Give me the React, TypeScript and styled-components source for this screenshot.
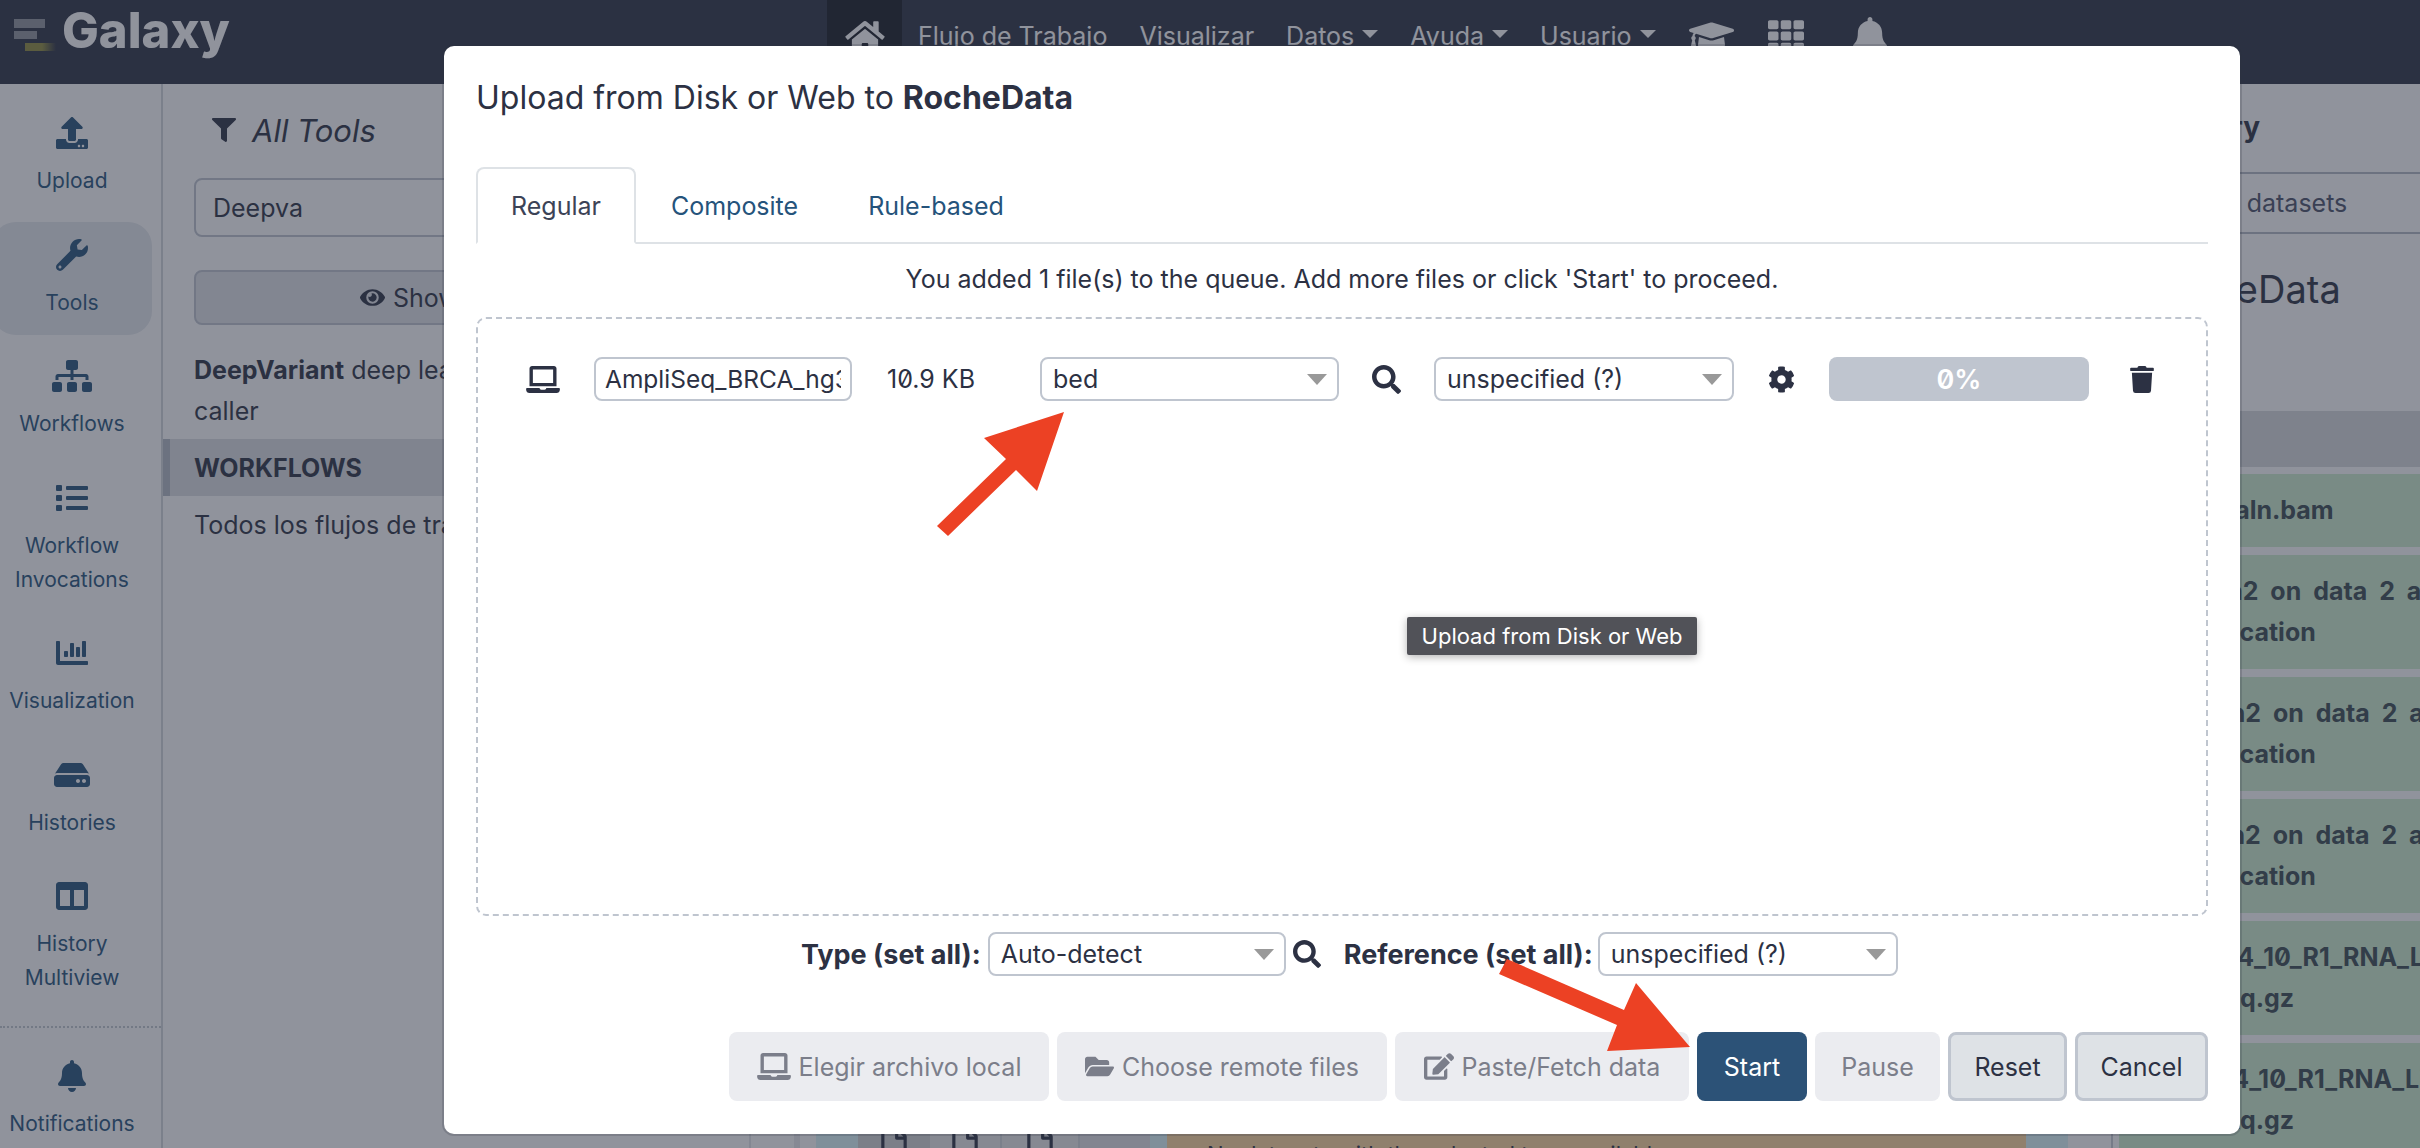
import React from 'react';
import styled, { createGlobalStyle } from 'styled-components';
import {
  FaBell,
  FaChartBar,
  FaCog,
  FaColumns,
  FaEdit,
  FaEye,
  FaFilter,
  FaFolderOpen,
  FaGraduationCap,
  FaHdd,
  FaHome,
  FaLaptop,
  FaList,
  FaRegFile,
  FaSearch,
  FaSitemap,
  FaTh,
  FaTrash,
  FaUpload,
  FaWrench,
} from 'react-icons/fa';

const FONT = `Inter, 'Noto Sans', 'Liberation Sans', sans-serif`;

const GlobalStyle = createGlobalStyle`
  html, body {
    margin: 0;
    padding: 0;
    background: #fff;
    overflow: hidden;
  }
  * {
    box-sizing: border-box;
  }
`;

const sideItems = [
  { icon: <FaUpload />, label: ['Upload'] },
  { icon: <FaWrench />, label: ['Tools'], active: true },
  { icon: <FaSitemap />, label: ['Workflows'] },
  { icon: <FaList />, label: ['Workflow', 'Invocations'] },
  { icon: <FaChartBar />, label: ['Visualization'] },
  { icon: <FaHdd />, label: ['Histories'] },
  { icon: <FaColumns />, label: ['History', 'Multiview'] },
];

const historyRows = [
  { indent: -21, lines: ['8: hg38.aln.bam'] },
  { indent: -26, lines: ['7: Kraken2 on data 2 and data 1', 'Classification'] },
  { indent: -26, lines: ['6: Kraken2 on data 2 and data 1', 'Classification'] },
  { indent: -26, lines: ['5: Kraken2 on data 2 and data 1', 'Classification'] },
  { indent: -11, lines: ['2: HG514_10_R1_RNA_Lib1', 'Lib.fastq.gz'] },
  { indent: -11, lines: ['1: HG514_10_R1_RNA_Lib1', 'Lib.fastq.gz'] },
];

const App = () => {
  return (
    <>
      <GlobalStyle />
      <Page>
        <Masthead>
          <Logo>
            <LogoMark viewBox="0 0 42 33" width="42" height="33">
              <defs>
                <linearGradient id="logoFade" x1="0" x2="1" y1="0" y2="0">
                  <stop offset="0" stopColor="#8f8c3c" />
                  <stop offset="0.55" stopColor="#8f8c3c" />
                  <stop offset="1" stopColor="#8f8c3c" stopOpacity="0" />
                </linearGradient>
              </defs>
              <rect x="0" y="0" width="31" height="9" fill="#90939c" />
              <rect x="0" y="12" width="23" height="8" fill="#90939c" />
              <rect x="11" y="24" width="31" height="8" fill="url(#logoFade)" />
            </LogoMark>
            <LogoText>Galaxy</LogoText>
          </Logo>
          <Nav>
            <HomeItem>
              <FaHome />
            </HomeItem>
            <NavItem>Flujo de Trabajo</NavItem>
            <NavItem>Visualizar</NavItem>
            <NavItem $caret>Datos</NavItem>
            <NavItem $caret>Ayuda</NavItem>
            <NavItem $caret>Usuario</NavItem>
            <NavIcon $w={45} $h={36}>
              <FaGraduationCap />
            </NavIcon>
            <NavIcon $w={36} $h={36}>
              <FaTh />
            </NavIcon>
            <NavIcon $w={34} $h={39} $wide>
              <FaBell />
            </NavIcon>
          </Nav>
        </Masthead>
        <Body>
          <Sidebar>
            {sideItems.map((item) => (
              <SideItem key={item.label[0]} $active={item.active}>
                <SideIcon>{item.icon}</SideIcon>
                <SideLabel>
                  {item.label.map((l) => (
                    <div key={l}>{l}</div>
                  ))}
                </SideLabel>
              </SideItem>
            ))}
            <SideDivider />
            <SideItem>
              <SideIcon>
                <FaBell />
              </SideIcon>
              <SideLabel>Notifications</SideLabel>
            </SideItem>
          </Sidebar>
          <ToolPanel>
            <ToolHeading>
              <FaFilter />
              <span>All Tools</span>
            </ToolHeading>
            <ToolSearch>Deepva</ToolSearch>
            <ToolButton>
              <FaEye />
              Show Sections
            </ToolButton>
            <ToolText>
              <b>DeepVariant</b> deep learning-based variant caller
            </ToolText>
            <ToolSection>WORKFLOWS</ToolSection>
            <ToolLink>Todos los flujos de trabajo</ToolLink>
          </ToolPanel>
          <Center>
            <CenterStrip>
              <StripCell $w={43} $bg="#fff" />
              <StripCell $w={6} $bg="#e9ebee" />
              <StripCell $w={16} $bg="#fff" />
              <StripCell $w={42} $bg="#dcf7fa" />
              <StripCell $w={72} $bg="#d2d5d6">
                <FaRegFile />
              </StripCell>
              <StripCell $w={72} $bg="#e9eaeb" $line>
                <FaRegFile />
              </StripCell>
              <StripCell $w={78} $bg="#e9eaeb" $line>
                <FaRegFile />
              </StripCell>
              <StripCell $w={70} $bg="#e1e2e5" />
              <StripCell $w={17} $bg="#dcf7fa" />
              <StripAlert>No datasets with the selected type available</StripAlert>
              <StripCell $w={42} $bg="#dcf7fa" />
              <StripCell $w={43} $bg="#fff" />
            </CenterStrip>
          </Center>
          <HistoryPanel>
            <HistoryHeading>History</HistoryHeading>
            <HistoryTabs>
              <span>Select</span>
              <span>datasets</span>
            </HistoryTabs>
            <HistoryName>RocheData</HistoryName>
            <HistoryBand />
            <HistoryRows>
              {historyRows.map((row, i) => (
                <HistoryRow key={i}>
                  {row.lines.map((line) => (
                    <HistoryLine key={line} $indent={row.indent}>
                      {line}
                    </HistoryLine>
                  ))}
                </HistoryRow>
              ))}
            </HistoryRows>
          </HistoryPanel>
        </Body>
        <Backdrop />
        <Dialog>
          <Modal>
            <ModalTitle>
              Upload from Disk or Web to <b>RocheData</b>
            </ModalTitle>
            <Tabs>
              <Tab $active>Regular</Tab>
              <Tab>Composite</Tab>
              <Tab>Rule-based</Tab>
            </Tabs>
            <QueueMessage>You added 1 file(s) to the queue. Add more files or click 'Start' to proceed.</QueueMessage>
            <DropBox>
              <FileRow>
                <RowIcon $w={34} $h={27} $justify="flex-start">
                  <FaLaptop />
                </RowIcon>
                <FileName readOnly value="AmpliSeq_BRCA_hg38.bed" />
                <FileSize>10.9 KB</FileSize>
                <Select $w={299}>bed</Select>
                <RowIcon $w={29} $h={29}>
                  <FaSearch />
                </RowIcon>
                <Select>unspecified (?)</Select>
                <RowIcon $w={27} $h={27}>
                  <FaCog />
                </RowIcon>
                <Progress>0%</Progress>
                <RowIcon $w={24} $h={27}>
                  <FaTrash />
                </RowIcon>
              </FileRow>
            </DropBox>
            <SetAllRow>
              <SetLabel $gap={7}>Type (set all):</SetLabel>
              <Select $w={298}>Auto-detect</Select>
              <SetSearch>
                <FaSearch />
              </SetSearch>
              <SetLabel $gap={5}>Reference (set all):</SetLabel>
              <Select>unspecified (?)</Select>
            </SetAllRow>
            <Buttons>
              <Button $kind="disabled" $w={320} $iconW={34}>
                <FaLaptop />
                Elegir archivo local
              </Button>
              <Button $kind="disabled" $w={330} $iconW={29}>
                <FaFolderOpen />
                Choose remote files
              </Button>
              <Button $kind="disabled" $w={294} $iconW={30}>
                <FaEdit />
                Paste/Fetch data
              </Button>
              <Button $kind="primary" $w={110}>
                Start
              </Button>
              <Button $kind="disabled" $w={125}>
                Pause
              </Button>
              <Button $kind="plain" $w={119}>
                Reset
              </Button>
              <Button $kind="plain" $w={133}>
                Cancel
              </Button>
            </Buttons>
            <Tooltip>Upload from Disk or Web</Tooltip>
          </Modal>
        </Dialog>
        <Arrows viewBox="0 0 2420 1148" width="2420" height="1148">
          <polygon
            fill="#ec4124"
            points="1064,412 1037,491 1016,470 948,536 937,526 1006,459 984,438"
          />
          <polygon
            fill="#ec4124"
            points="1690,1047 1607,1051 1617,1025 1499,974 1507,959 1624,1010 1636,983"
          />
        </Arrows>
      </Page>
    </>
  );
};

const Page = styled.div`
  position: relative;
  width: 2420px;
  height: 1148px;
  overflow: hidden;
  font-family: ${FONT};
  font-size: 25px;
  font-feature-settings: 'zero';
  color: #2c3143;
`;

const Masthead = styled.div`
  display: flex;
  height: 84px;
  background: #2c3143;
`;

const Logo = styled.div`
  display: flex;
  width: 827px;
  padding: 0 0 0 14px;
  gap: 6px;
  align-items: flex-start;
`;

const LogoMark = styled.svg`
  margin-top: 19px;
  flex: none;
`;

const LogoText = styled.div`
  font-size: 49px;
  font-weight: 800;
  line-height: 62px;
  color: #fff;
`;

const Nav = styled.div`
  display: flex;
  height: 72px;
  color: #fff;
`;

const HomeItem = styled.div`
  display: flex;
  align-items: center;
  justify-content: center;
  width: 75px;
  background: #171a23;
  svg {
    height: 35px;
    width: 40px;
  }
`;

const NavItem = styled.div<{ $caret?: boolean }>`
  display: flex;
  align-items: center;
  padding: 0 16px;
  white-space: nowrap;
  &::after {
    content: '';
    display: ${(props) => (props.$caret ? 'block' : 'none')};
    margin-left: 8px;
    margin-bottom: 4px;
    border-top: 8px solid #fff;
    border-left: 8px solid transparent;
    border-right: 8px solid transparent;
  }
`;

const NavIcon = styled.div<{ $w: number; $h: number; $wide?: boolean }>`
  display: flex;
  align-items: center;
  padding: 0 17px;
  margin-left: ${(props) => (props.$wide ? '15px' : '0')};
  svg {
    width: ${(props) => props.$w}px;
    height: ${(props) => props.$h}px;
  }
`;

const Body = styled.div`
  display: flex;
  height: 1064px;
`;

const Sidebar = styled.div`
  flex: none;
  width: 163px;
  padding-top: 16px;
  background: #fff;
  border-right: 2px solid #d3d7dc;
  display: flex;
  flex-direction: column;
  gap: 8.5px;
`;

const SideItem = styled.div<{ $active?: boolean }>`
  width: 160px;
  margin-left: -8px;
  padding: 17px 0 15px;
  display: flex;
  flex-direction: column;
  align-items: center;
  gap: 15px;
  border-radius: 24px;
  background: ${(props) => (props.$active ? '#e6eaee' : 'transparent')};
`;

const SideIcon = styled.div`
  height: 32px;
  display: flex;
  justify-content: center;
  color: #25537b;
  svg {
    width: 40px;
    height: 32px;
  }
`;

const SideLabel = styled.div`
  font-size: 21px;
  line-height: 34px;
  text-align: center;
  color: #25537b;
`;

const SideDivider = styled.div`
  margin: 7px 0 7px;
  border-top: 2px dotted #c3c8cf;
`;

const ToolPanel = styled.div`
  flex: none;
  width: 588px;
  background: #fff;
  border-right: 2px solid #e4e6ea;
  display: flex;
  flex-direction: column;
  padding-top: 28px;
`;

const ToolHeading = styled.div`
  display: flex;
  align-items: center;
  gap: 16px;
  margin-left: 49px;
  font-size: 31px;
  font-style: italic;
  height: 36px;
  svg {
    font-size: 24px;
  }
`;

const ToolSearch = styled.div`
  margin: 30px 0 0 31px;
  height: 59px;
  padding-left: 17px;
  display: flex;
  align-items: center;
  border: 2px solid #bfc5cf;
  border-radius: 8px;
`;

const ToolButton = styled.div`
  margin: 33px 0 0 31px;
  height: 55px;
  display: flex;
  align-items: center;
  gap: 8px;
  padding-left: 164px;
  background: #e1e4e8;
  border: 2px solid #bfc5cf;
  border-radius: 8px;
`;

const ToolText = styled.div`
  margin: 25px 24px 0 31px;
  line-height: 41px;
`;

const ToolSection = styled.div`
  margin-top: 7px;
  height: 57px;
  display: flex;
  align-items: center;
  padding-left: 24px;
  font-weight: 700;
  background: #dde0e3;
  border-left: 7px solid #b3b9c5;
`;

const ToolLink = styled.div`
  margin: 9px 0 0 31px;
  line-height: 41px;
`;

const Center = styled.div`
  flex: 1;
  min-width: 0;
  background: #fff;
  display: flex;
  flex-direction: column;
  justify-content: flex-end;
`;

const CenterStrip = styled.div`
  display: flex;
  height: 40px;
  overflow: hidden;
`;

const StripCell = styled.div<{ $w: number; $bg: string; $line?: boolean }>`
  flex: none;
  width: ${(props) => props.$w}px;
  background: ${(props) => props.$bg};
  border-right: ${(props) => (props.$line ? '2px solid #d3d7dc' : 'none')};
  display: flex;
  justify-content: center;
  svg {
    height: 34px;
    width: 26px;
    margin-top: 20px;
  }
`;

const StripAlert = styled.div`
  flex: 1;
  min-width: 0;
  background: #ffd79d;
  padding: 33px 0 0 40px;
  font-size: 22px;
  white-space: nowrap;
`;

const HistoryPanel = styled.div`
  flex: none;
  width: 309px;
  background: #fff;
  border-left: 2px solid #c9cdd4;
  display: flex;
  flex-direction: column;
  overflow: hidden;
`;

const HistoryHeading = styled.div`
  flex: none;
  height: 90px;
  padding: 26px 0 0 47px;
  font-size: 28px;
  font-weight: 700;
  border-bottom: 2px solid #b3b9c5;
`;

const HistoryTabs = styled.div`
  flex: none;
  height: 60px;
  padding-left: 40px;
  display: flex;
  align-items: center;
  gap: 20px;
  white-space: nowrap;
  color: #4a5168;
  border-bottom: 2px solid #b3b9c5;
`;

const HistoryName = styled.div`
  flex: none;
  height: 177px;
  padding: 32px 0 0 32px;
  font-size: 38px;
`;

const HistoryBand = styled.div`
  flex: none;
  height: 56px;
  background: #d9dbde;
`;

const HistoryRows = styled.div`
  flex: none;
  display: flex;
  flex-direction: column;
  gap: 8px;
  margin: 7px 0 0 6px;
`;

const HistoryRow = styled.div`
  flex: none;
  padding: 16px 0 16px 29px;
  background: #cfeecf;
  font-weight: 700;
`;

const HistoryLine = styled.div<{ $indent: number }>`
  line-height: 41px;
  white-space: nowrap;
  word-spacing: 6px;
  color: #3a4a50;
  &:first-child {
    text-indent: ${(props) => props.$indent}px;
  }
`;

const Backdrop = styled.div`
  position: absolute;
  inset: 0;
  background: rgba(44, 49, 67, 0.525);
`;

const Dialog = styled.div`
  position: absolute;
  inset: 0;
  padding: 46px 0 0 444px;
`;

const Modal = styled.div`
  position: relative;
  width: 1796px;
  height: 1088px;
  padding: 0 32px;
  background: #fff;
  border-radius: 10px;
  box-shadow: 0 0 0 2px rgba(44, 49, 67, 0.2);
`;

const ModalTitle = styled.div`
  padding-top: 33px;
  height: 121px;
  font-size: 32px;
  line-height: 38px;
`;

const Tabs = styled.div`
  display: flex;
  height: 77px;
  border-bottom: 2px solid #dee2e6;
`;

const Tab = styled.div<{ $active?: boolean }>`
  height: 77px;
  padding: 0 33px;
  display: flex;
  align-items: center;
  color: ${(props) => (props.$active ? '#3c4356' : '#25537b')};
  background: ${(props) => (props.$active ? '#fff' : 'transparent')};
  border: 2px solid ${(props) => (props.$active ? '#dee2e6' : 'transparent')};
  border-bottom-color: ${(props) => (props.$active ? '#fff' : 'transparent')};
  border-radius: 8px 8px 0 0;
`;

const QueueMessage = styled.div`
  height: 73px;
  padding-top: 15px;
  line-height: 41px;
  text-align: center;
`;

const DropBox = styled.div`
  height: 599px;
  border: 2px dashed #bfc5cf;
  border-radius: 10px;
  padding: 38px 0 0 48px;
`;

const FileRow = styled.div`
  display: grid;
  grid-template-columns: 68px 258px 188px 299px 95px 300px 95px 260px 105px;
  align-items: center;
`;

const RowIcon = styled.div<{ $w: number; $h: number; $justify?: string }>`
  display: flex;
  justify-content: ${(props) => props.$justify || 'center'};
  color: #2c3143;
  svg {
    width: ${(props) => props.$w}px;
    height: ${(props) => props.$h}px;
  }
`;

const FileName = styled.input`
  width: 100%;
  height: 44px;
  padding: 0 9px;
  font-family: inherit;
  font-size: 24.5px;
  font-feature-settings: 'zero';
  color: #2c3143;
  border: 2px solid #bfc5cf;
  border-radius: 8px;
  outline: none;
  background: #fff;
`;

const FileSize = styled.div`
  padding-left: 35px;
`;

const Select = styled.div<{ $w?: number }>`
  position: relative;
  width: ${(props) => props.$w || 300}px;
  height: 44px;
  padding-left: 11px;
  display: flex;
  align-items: center;
  background: #fff;
  border: 2px solid #bfc5cf;
  border-radius: 8px;
  flex: none;
  &::after {
    content: '';
    position: absolute;
    right: 10px;
    top: 15px;
    border-top: 11px solid #999;
    border-left: 10px solid transparent;
    border-right: 10px solid transparent;
  }
`;

const Progress = styled.div`
  height: 44px;
  display: flex;
  align-items: center;
  justify-content: center;
  color: #fff;
  font-size: 27px;
  font-weight: 600;
  background: #bfc5cf;
  border-radius: 8px;
`;

const SetAllRow = styled.div`
  display: flex;
  align-items: center;
  height: 44px;
  margin-top: 16px;
  padding-left: 325px;
`;

const SetLabel = styled.div<{ $gap: number }>`
  font-size: 27px;
  font-weight: 700;
  white-space: nowrap;
  margin-right: ${(props) => props.$gap}px;
`;

const SetSearch = styled.div`
  display: flex;
  margin: 0 23px 0 7px;
  svg {
    font-size: 28px;
  }
`;

const Buttons = styled.div`
  display: flex;
  justify-content: flex-end;
  gap: 8px;
  margin-top: 56px;
`;

const Button = styled.div<{ $kind: 'disabled' | 'primary' | 'plain'; $w: number; $iconW?: number }>`
  width: ${(props) => props.$w}px;
  height: 69px;
  display: flex;
  align-items: center;
  justify-content: center;
  gap: 8px;
  white-space: nowrap;
  border-radius: 8px;
  flex: none;
  color: ${(props) => (props.$kind === 'disabled' ? '#7b7e8a' : props.$kind === 'primary' ? '#fff' : '#2c3143')};
  background: ${(props) =>
    props.$kind === 'disabled' ? '#ebecf0' : props.$kind === 'primary' ? '#2c5277' : '#dee2e6'};
  border: ${(props) => (props.$kind === 'plain' ? '3px solid #bfc5cf' : 'none')};
  svg {
    width: ${(props) => props.$iconW || 27}px;
    height: 27px;
    flex: none;
  }
`;

const Tooltip = styled.div`
  position: absolute;
  left: 963px;
  top: 571px;
  width: 290px;
  height: 38px;
  display: flex;
  align-items: center;
  justify-content: center;
  font-size: 22px;
  color: #fff;
  background: #515258;
  border-radius: 2px;
  box-shadow: 0 2px 8px rgba(0, 0, 0, 0.3);
`;

const Arrows = styled.svg`
  position: absolute;
  left: 0;
  top: 0;
  pointer-events: none;
`;

export default App;
